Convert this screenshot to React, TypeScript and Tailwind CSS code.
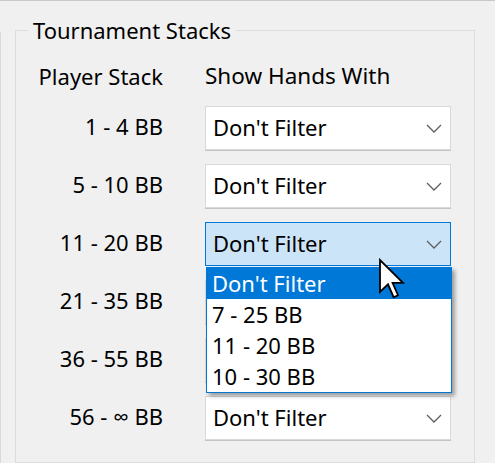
import React from "react";

const font = { fontFamily: '"Segoe UI", "Noto Sans", "Open Sans", sans-serif' };

const rows = ["1 - 4 BB", "5 - 10 BB", "11 - 20 BB", "21 - 35 BB", "36 - 55 BB", "56 - ∞ BB"];
const options = ["Don't Filter", "7 - 25 BB", "11 - 20 BB", "10 - 30 BB"];

function Chevron() {
    return (
        <svg width="16" height="9" viewBox="0 0 16 9" fill="none" className="shrink-0">
            <path d="M1 1l7 7 7-7" stroke="#5f5f5f" strokeWidth="1.3" />
        </svg>
    );
}

// combos under the open list are covered, so they render without content
function Combo({ focused, covered }: { focused?: boolean; covered?: boolean }) {
    return (
        <div
            className={`h-[44px] w-[246px] flex items-center pl-[7px] pr-[8px] border ${
                focused
                    ? "bg-[#cce4f7] border-[#0078d7]"
                    : "bg-white border-[#d9d9d9] shadow-[0_1px_0_#c4c4c4]"
            }`}
        >
            {!covered && (
                <>
                    <span className="flex-1 text-[22px] text-black leading-none pb-[2px]">Don't Filter</span>
                    <Chevron />
                </>
            )}
        </div>
    );
}

function Cursor() {
    return (
        <svg className="absolute left-[378px] top-[257px]" width="28" height="42" viewBox="0 0 14 21">
            <path
                d="M1 1 L1 17 L5 13.2 L7.8 19.6 L10 18.6 L7.3 12.4 L12.5 12.4 Z"
                fill="white"
                stroke="black"
                strokeWidth="0.9"
                strokeLinejoin="miter"
            />
        </svg>
    );
}

export default function App() {
    return (
        <div className="relative w-[495px] h-[463px] bg-[#f0f0f0] border-t border-[#c8c8c8] overflow-hidden" style={font}>
            <div className="absolute left-0 top-[31px] bottom-0 w-px bg-[#dadada]" />
            <fieldset className="ml-[15px] mt-[14px] w-[460px] h-[448px] border border-[#dcdcdc] pl-0 pr-0">
                <legend className="ml-[12px] px-[5px] text-[22px] leading-[30px] text-black">Tournament Stacks</legend>
                <div className="grid grid-cols-[147px_246px] gap-x-[42px] items-center mt-[16px]">
                    <div className="text-right text-[22px] text-black leading-[30px]">Player Stack</div>
                    <div className="text-[22.5px] text-black leading-[30px]">Show Hands With</div>
                </div>
                <div className="grid grid-cols-[147px_246px] gap-x-[42px] gap-y-[14px] items-center mt-[15px]">
                    {rows.map((r, i) => (
                        <React.Fragment key={r}>
                            <div className="text-right text-[22px] text-black leading-none pb-[4px]">{r}</div>
                            <Combo focused={i === 2} covered={i === 3 || i === 4} />
                        </React.Fragment>
                    ))}
                </div>
            </fieldset>
            <div className="absolute left-[206px] top-[266px] w-[246px] bg-white border border-[#0078d7] shadow-[3px_3px_4px_rgba(0,0,0,0.35)]">
                {options.map((o, i) => (
                    <div
                        key={o}
                        className={`h-[31px] flex items-center pl-[5px] text-[22px] leading-none pb-[2px] ${
                            i === 0 ? "bg-[#0078d7] text-white" : "text-black"
                        }`}
                    >
                        {o}
                    </div>
                ))}
            </div>
            <Cursor />
        </div>
    );
}
